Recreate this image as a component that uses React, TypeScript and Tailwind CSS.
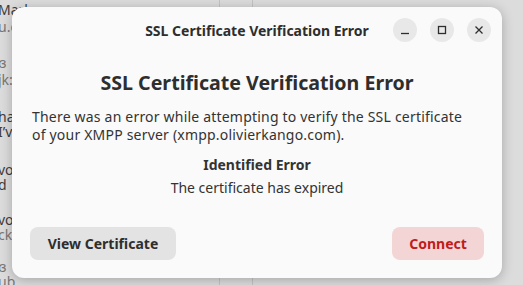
export default function App() {
  const font = { fontFamily: '"Noto Sans", "Open Sans", sans-serif' }
  return (
    <div className="relative w-[523px] h-[285px] overflow-hidden bg-[#dcdcdc] text-[#3d3d3d]" style={font}>
      {/* background app, dimmed */}
      <div className="flex h-full">
        <div className="w-[222px] border-r border-[#c4c4c4] pt-[2px] text-[14px] leading-[15px] -ml-[2px]">
          <div className="h-[17px]">Marl</div>
          <div className="h-[36px] text-[#777]">u.c</div>
          <div className="h-[17px] text-[#777]">ɞ</div>
          <div className="h-[37px] text-[#777]">jk:</div>
          <div className="h-[15px]">ha</div>
          <div className="h-[38px]">I’v</div>
          <div className="h-[15px]">vo</div>
          <div className="h-[35px]">d</div>
          <div className="h-[15px]">vo</div>
          <div className="h-[32px] text-[#777]">ck</div>
          <div className="h-[15px] text-[#777]">ɞ</div>
          <div className="text-[#777]">ub_</div>
        </div>
        <div className="w-[33px] border-r border-[#c4c4c4]" />
        <div className="flex-1" />
      </div>

      {/* dialog */}
      <div className="absolute left-[12px] top-[7px] w-[490px] h-[271px] rounded-[12px] bg-[#fafafa] shadow-[0_2px_12px_rgba(0,0,0,0.25)] flex flex-col">
        <div className="relative h-[46px] flex items-center justify-center">
          <span className="text-[14px] font-bold text-[#2e2e2e]">SSL Certificate Verification Error</span>
          <div className="absolute right-[11px] top-[11px] flex gap-[13px]">
            <button className="w-[24px] h-[24px] rounded-full bg-[#e8e8e8] flex items-center justify-center">
              <svg width="10" height="10" viewBox="0 0 10 10"><path d="M1 8.5h8" stroke="#2e2e2e" strokeWidth="1.3" /></svg>
            </button>
            <button className="w-[24px] h-[24px] rounded-full bg-[#e8e8e8] flex items-center justify-center">
              <svg width="10" height="10" viewBox="0 0 10 10"><rect x="1.5" y="1.5" width="7" height="7" fill="none" stroke="#2e2e2e" strokeWidth="1.3" /></svg>
            </button>
            <button className="w-[24px] h-[24px] rounded-full bg-[#e8e8e8] flex items-center justify-center">
              <svg width="10" height="10" viewBox="0 0 10 10"><path d="M1.5 1.5l7 7M8.5 1.5l-7 7" stroke="#2e2e2e" strokeWidth="1.3" /></svg>
            </button>
          </div>
        </div>
        <div className="flex flex-col px-[20px] pt-[16px]">
          <h1 className="text-center text-[19.6px] leading-[28px] font-bold text-[#2e2e2e]">SSL Certificate Verification Error</h1>
          <p className="mt-[11px] w-[436px] text-[14px] leading-[18px] tracking-[0.2px] text-[#333]">
            There was an error while attempting to verify the SSL certificate of your XMPP server (xmpp.olivierkango.com).
          </p>
          <div className="mt-[10px] text-center text-[14px] leading-[22px] font-bold text-[#333]">Identified Error</div>
          <div className="mt-[1px] text-center text-[14px] leading-[22px] text-[#333]">The certificate has expired</div>
        </div>
        <div className="mt-auto flex justify-between px-[18px] pb-[18px]">
          <button className="h-[33px] w-[146px] rounded-[8px] bg-[#e3e3e3] text-[14px] font-bold text-[#2e2e2e]">View Certificate</button>
          <button className="h-[33px] w-[92px] rounded-[8px] bg-[#f3d5d5] text-[14px] font-bold text-[#c01c1c]">Connect</button>
        </div>
      </div>
    </div>
  )
}
